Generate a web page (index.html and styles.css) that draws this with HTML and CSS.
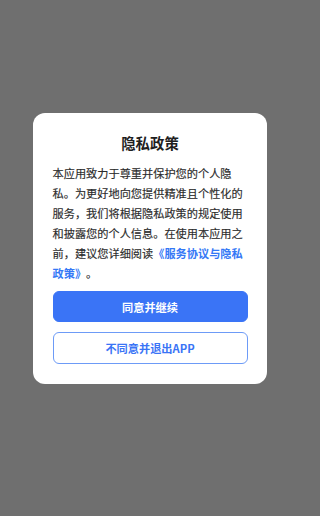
FILE: index.html
```html
<!DOCTYPE html>
<html lang="zh-CN">
<head>
<meta charset="utf-8">
<link rel="stylesheet" href="styles.css">
</head>
<body>
<div class="mask">
  <div class="dialog">
    <h1 class="title">隐私政策</h1>
    <p class="content">本应用致力于尊重并保护您的个人隐私。为更好地向您提供精准且个性化的服务，我们将根据隐私政策的规定使用和披露您的个人信息。在使用本应用之前，建议您详细阅读<span class="link">《服务协议与隐私政策》</span>。</p>
    <div class="actions">
      <button class="btn btn-primary">同意并继续</button>
      <button class="btn btn-outline">不同意并退出APP</button>
    </div>
  </div>
</div>
</body>
</html>
```
FILE: styles.css
```css
html, body {
  margin: 0;
  padding: 0;
  height: 100%;
}
body {
  font-family: "Noto Sans CJK SC", "Noto Sans", sans-serif;
  background: #6f6f6f;
  text-spacing-trim: space-all;
}
.mask {
  width: 300px;
  height: 516px;
  box-sizing: border-box;
  padding-top: 113px;
  display: flex;
  justify-content: center;
  align-items: flex-start;
}
.dialog {
  width: 234px;
  box-sizing: border-box;
  background: #ffffff;
  border-radius: 12px;
  padding: 20px 19.5px 20px;
  display: flex;
  flex-direction: column;
}
.title {
  margin: 0;
  font-size: 14.4px;
  line-height: 20px;
  font-weight: 700;
  color: #1f1f1f;
  text-align: center;
}
.content {
  margin: 10px 0 0;
  font-size: 11.2px;
  line-height: 20px;
  color: #2b2b2b;
  text-align: left;
  text-spacing-trim: space-all;
  -webkit-text-stroke: 0.15px #2b2b2b;
}
.link {
  color: #3478f6;
  font-weight: 700;
  -webkit-text-stroke: 0;
}
.actions {
  margin-top: 8px;
  display: flex;
  flex-direction: column;
  gap: 10px;
}
.btn {
  font-family: inherit;
  font-size: 11.2px;
  font-weight: 700;
  height: 31px;
  border-radius: 6px;
  margin: 0;
  padding: 0;
  width: 100%;
  box-sizing: border-box;
}
.btn-primary {
  background: #3a74f6;
  color: #ffffff;
  border: 1px solid #3a74f6;
}
.btn-outline {
  background: #ffffff;
  color: #3a74f6;
  border: 1px solid #6d9bf7;
  height: 32px;
}
```
